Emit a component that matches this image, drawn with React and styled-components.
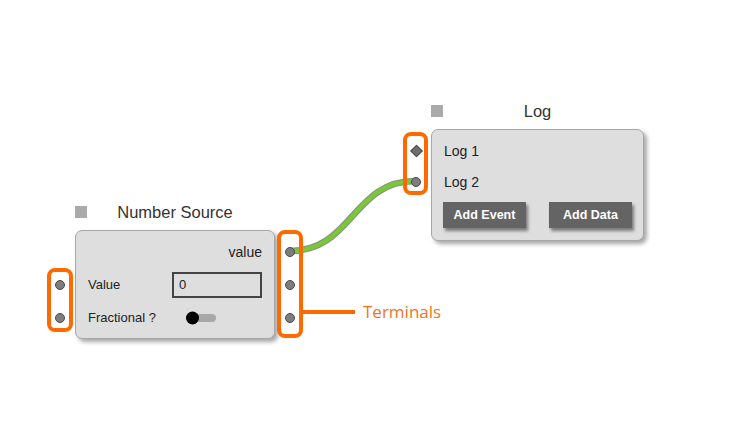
import React from 'react'
import styled, { createGlobalStyle, css } from 'styled-components'

const orange = '#ff6a00'
const cardGrey = '#dedede'

const GlobalStyle = createGlobalStyle`
  html, body {
    margin: 0;
    padding: 0;
    background: #fff;
  }
  body {
    font-family: 'Liberation Sans', Arial, sans-serif;
    color: #222;
  }
`

const Canvas = styled.div`
  position: relative;
  width: 733px;
  height: 445px;
  overflow: hidden;
  background: #fff;
`

const WireLayer = styled.svg`
  position: absolute;
  left: 0;
  top: 0;
  width: 733px;
  height: 445px;
`

const Node = styled.div`
  position: absolute;
  left: ${p => p.x}px;
  top: ${p => p.y}px;
  width: ${p => p.w}px;
  display: flex;
  flex-direction: column;
  gap: 6px;
`

const NodeHeader = styled.div`
  display: grid;
  grid-template-columns: 12px 1fr 12px;
  align-items: center;
  height: 24px;
`

const Handle = styled.span`
  width: 12px;
  height: 12px;
  background: #aaa;
`

const NodeTitle = styled.span`
  text-align: center;
  font-size: 16.5px;
  color: #333;
`

const Card = styled.div`
  box-sizing: border-box;
  background: ${cardGrey};
  border: 1px solid #a8a8a8;
  border-radius: 7px;
  box-shadow: 3px 3px 4px rgba(0, 0, 0, 0.35);
  padding: ${p => p.pad};
`

const Row = styled.div`
  position: relative;
  height: ${p => p.h}px;
  padding: 0 12px;
  display: flex;
  align-items: center;
  justify-content: ${p => p.justify || 'flex-start'};
`

const Label = styled.span`
  font-size: ${p => p.size || 13}px;
  color: #222;
`

const Terminal = styled.span`
  position: absolute;
  top: 50%;
  ${p => p.side}: -21px;
  width: 10px;
  height: 10px;
  box-sizing: border-box;
  background: #7d7d7d;
  border: 1px solid #4a4a4a;
  transform: translateY(-50%);
  ${p =>
    p.shape === 'diamond'
      ? css`
          width: 9px;
          height: 9px;
          margin-${p.side}: 1px;
          transform: translateY(-50%) rotate(45deg);
          background: #6e6e6e;
        `
      : css`
          border-radius: 50%;
        `};
`

const ValueInput = styled.div`
  box-sizing: border-box;
  width: 90px;
  height: 26px;
  border: 2px solid #444;
  padding: 0 5px;
  display: flex;
  align-items: center;
  font-size: 13px;
  color: #222;
`

const Toggle = styled.span`
  position: relative;
  margin-left: 30px;
  width: 30px;
  height: 8px;
  border-radius: 4px;
  background: #a8a8a8;

  &::before {
    content: '';
    position: absolute;
    left: 0;
    top: 50%;
    width: 13px;
    height: 13px;
    border-radius: 50%;
    background: #000;
    transform: translateY(-50%);
  }
`

const ButtonBar = styled.div`
  display: flex;
  gap: 23px;
  padding: 5px 11px 0;
`

const ActionButton = styled.button`
  width: 83px;
  height: 26px;
  border: none;
  padding: 0;
  background: #646464;
  color: #fff;
  font-family: 'Liberation Sans', Arial, sans-serif;
  font-weight: bold;
  font-size: 12.5px;
  box-shadow: 2px 3px 3px rgba(0, 0, 0, 0.45);
`

const Highlight = styled.div`
  position: absolute;
  left: ${p => p.x}px;
  top: ${p => p.y}px;
  width: ${p => p.w}px;
  height: ${p => p.h}px;
  box-sizing: border-box;
  border: 4px solid ${orange};
  border-radius: 8px;
`

const Callout = styled.div`
  position: absolute;
  left: 303px;
  top: 300px;
  display: flex;
  align-items: center;
  gap: 8px;
`

const CalloutLine = styled.span`
  width: 52px;
  height: 4px;
  background: ${orange};
`

const CalloutText = styled.span`
  font-family: 'Open Sans', 'Noto Sans', sans-serif;
  font-size: 17px;
  color: #f07424;
`

function Wire({ from, to }) {
  const mid = (to[0] - from[0]) / 2
  const d = `M${from[0]},${from[1]} C${from[0] + mid},${from[1]} ${to[0] - mid},${to[1]} ${to[0]},${to[1]}`
  return (
    <g fill="none" strokeLinecap="round">
      <path d={d} stroke="#5f6b55" strokeWidth="6.5" opacity="0.75" />
      <path d={d} stroke="#7cc63a" strokeWidth="4.5" />
    </g>
  )
}

function NodeBox({ x, y, w, title, pad, children }) {
  return (
    <Node x={x} y={y} w={w}>
      <NodeHeader>
        <Handle />
        <NodeTitle>{title}</NodeTitle>
      </NodeHeader>
      <Card pad={pad}>{children}</Card>
    </Node>
  )
}

export default function App() {
  return (
    <>
      <GlobalStyle />
      <Canvas>
        <WireLayer viewBox="0 0 733 445">
          <Wire from={[290, 251]} to={[415, 181]} />
        </WireLayer>

        <NodeBox x={75} y={200} w={200} title="Number Source" pad="4px 0 4px">
          <Row h={33} justify="flex-end">
            <Label size={14}>value</Label>
            <Terminal side="right" />
          </Row>
          <Row h={33} justify="space-between">
            <Terminal side="left" />
            <Label>Value</Label>
            <ValueInput>0</ValueInput>
            <Terminal side="right" />
          </Row>
          <Row h={33}>
            <Terminal side="left" />
            <Label>Fractional ?</Label>
            <Toggle />
            <Terminal side="right" />
          </Row>
        </NodeBox>

        <NodeBox x={431} y={99} w={213} title="Log" pad="5px 0 12px">
          <Row h={31}>
            <Terminal side="left" shape="diamond" />
            <Label size={14}>Log 1</Label>
          </Row>
          <Row h={31}>
            <Terminal side="left" />
            <Label size={14}>Log 2</Label>
          </Row>
          <ButtonBar>
            <ActionButton>Add Event</ActionButton>
            <ActionButton>Add Data</ActionButton>
          </ButtonBar>
        </NodeBox>

        <Highlight x={47} y={268} w={26} h={64} />
        <Highlight x={277} y={230} w={26} h={108} />
        <Highlight x={403} y={132} w={25} h={63} />

        <Callout>
          <CalloutLine />
          <CalloutText>Terminals</CalloutText>
        </Callout>
      </Canvas>
    </>
  )
}
